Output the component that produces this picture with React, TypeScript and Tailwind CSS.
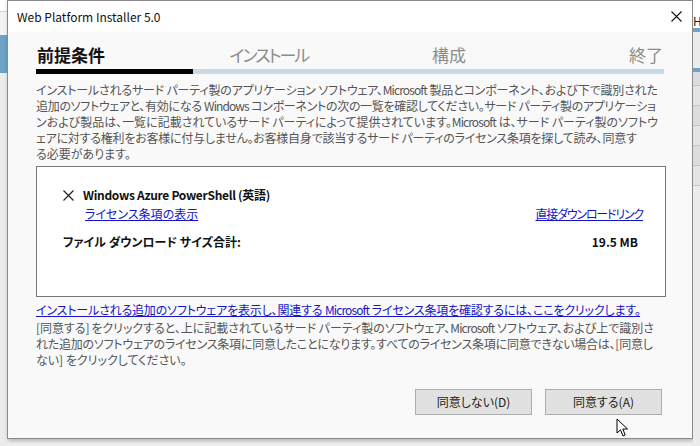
import React from 'react';

const font = "font-['Noto_Sans_CJK_JP','Noto_Sans',sans-serif] [font-feature-settings:'palt']";

const Cursor: React.FC = () => (
  <svg width="14" height="20" viewBox="0 0 14 20" className="absolute left-[616px] top-[418px]">
    <path d="M1 1 L1 15 L4.5 11.8 L7 18 L9.2 17 L6.8 11 L11.5 11 Z" fill="#fff" stroke="#000" strokeWidth="1" strokeLinejoin="round" />
  </svg>
);

const ButtonBox: React.FC<{ label: string }> = ({ label }) => (
  <button className="h-[26px] w-[117px] border border-[#adadad] bg-[#e1e1e1] text-[12px] text-[#222]">
    {label}
  </button>
);

// one wrapped line of the Windows text, stretched to the width it has in the screenshot
const Line: React.FC<{ w: string; children: React.ReactNode }> = ({ w, children }) => (
  <span className={`block whitespace-nowrap tracking-[-0.9px] [text-align-last:justify] ${w}`}>{children}</span>
);

export default function App() {
  return (
    <div className={`relative flex h-[446px] w-[700px] overflow-hidden bg-[#f0f0f0] ${font}`}>
      {/* left background strip */}
      <div className="flex w-[7px] flex-col">
        <div className="h-[12px] border-b border-[#d0d0d0] bg-white" />
        <div className="h-[23px] bg-[#f4f4f4]" />
        <div className="h-[38px] bg-[#6da3c6]" />
        <div className="flex-1 bg-[#ececec]" />
      </div>

      {/* dialog */}
      <div className="flex h-[439px] w-[686px] flex-col border border-[#8a8a8a] bg-[#f9f9f9] shadow-[1px_2px_4px_rgba(0,0,0,0.25)]">
        <div className="flex h-[31px] items-center justify-between bg-white pl-[9px] pr-[10px]">
          <span className="text-[12px] text-[#111]">Web Platform Installer 5.0</span>
          <svg width="11" height="11" viewBox="0 0 11 11">
            <path d="M0.5 0.5 L10.5 10.5 M10.5 0.5 L0.5 10.5" stroke="#111" strokeWidth="1.1" />
          </svg>
        </div>

        <div className="flex flex-1 flex-col pl-[28px] pr-[26px]">
          {/* steps */}
          <div className="grid h-[37px] grid-cols-4 items-end pb-[2px] text-[17px] leading-[24px]">
            <span className="pl-[1px] font-bold text-[#111]">前提条件</span>
            <span className="pl-[36px] tracking-[-2px] text-[#8c8c8c]">インストール</span>
            <span className="pl-[81px] text-[#8c8c8c]">構成</span>
            <span className="pr-[3px] text-right text-[#8c8c8c]">終了</span>
          </div>
          <div className="flex h-[5px] w-[628px]">
            <div className="w-[157px] bg-black" />
            <div className="flex-1 bg-[#c9d9e5]" />
          </div>

          <div className="mt-[8px] text-[12px] leading-[16px] text-[#555]">
            <Line w="w-[621px]">インストールされるサード パーティ製のアプリケーション ソフトウェア、Microsoft 製品とコンポーネント、および下で識別された</Line>
            <Line w="w-[619px]">追加のソフトウェアと、有効になる Windows コンポーネントの次の一覧を確認してください。サード パーティ製のアプリケーショ</Line>
            <Line w="w-[621px]">ンおよび製品は、一覧に記載されているサード パーティによって提供されています。Microsoft は、サード パーティ製のソフトウ</Line>
            <Line w="w-[600px]">ェアに対する権利をお客様に付与しません。お客様自身で該当するサード パーティのライセンス条項を探して読み、同意す</Line>
            <span className="block">る必要があります。</span>
          </div>

          {/* product box */}
          <div className="mt-[4px] flex h-[131px] w-[630px] flex-col border border-[#777] bg-white pl-[26px] pr-[22px] pt-[20px] text-[12px]">
            <div className="flex items-center gap-[9px]">
              <svg width="11" height="11" viewBox="0 0 11 11">
                <path d="M0.5 0.5 L10.5 10.5 M10.5 0.5 L0.5 10.5" stroke="#222" strokeWidth="1.2" />
              </svg>
              <span className="font-bold leading-[16px] tracking-[-0.3px] text-[#111]">Windows Azure PowerShell (英語)</span>
            </div>
            <div className="mt-[3px] flex items-center justify-between pl-[22px] leading-[16px]">
              <a className="text-[#1515c8] underline">ライセンス条項の表示</a>
              <a className="tracking-[-1.2px] text-[#1515c8] underline">直接ダウンロードリンク</a>
            </div>
            <div className="mt-[12px] flex items-center justify-between pr-[5px] leading-[16px]">
              <span className="font-bold text-[#111]">ファイル ダウンロード サイズ合計:</span>
              <span className="font-bold text-[#111]">19.5 MB</span>
            </div>
          </div>

          <a className="mt-[5px] text-[12px] leading-[16px] text-[#1515c8] underline">
            <Line w="w-[604px]">インストールされる追加のソフトウェアを表示し、関連する Microsoft ライセンス条項を確認するには、ここをクリックします。</Line>
          </a>

          <div className="mt-[2px] text-[12px] leading-[16px] text-[#555]">
            <Line w="w-[617px]">[同意する] をクリックすると、上に記載されているサード パーティ製のソフトウェア、Microsoft ソフトウェア、および上で識別さ</Line>
            <Line w="w-[616px]">れた追加のソフトウェアのライセンス条項に同意したことになります。すべてのライセンス条項に同意できない場合は、[同意し</Line>
            <span className="block">ない] をクリックしてください。</span>
          </div>

          <div className="mt-auto mb-[23px] flex justify-end gap-[13px] pr-[4px]">
            <ButtonBox label="同意しない(D)" />
            <ButtonBox label="同意する(A)" />
          </div>
        </div>
      </div>

      {/* right background strip */}
      <div className="flex w-[7px] flex-col">
        <div className="h-[14px] bg-white" />
        <div className="h-[14px] overflow-hidden bg-white text-[12px] leading-[14px] text-[#222]">H</div>
        <div className="h-[4px] bg-[#6da3c6]" />
        <div className="h-[36px] bg-[#ececec]" />
        <div className="h-[4px] bg-[#6da3c6]" />
        <div className="h-[14px] border-b border-[#c8c8c8] bg-[#dcdcdc]" />
        <div className="h-[20px] border-b border-[#c8c8c8] bg-[#e4e4e4]" />
        <div className="h-[20px] border-b border-[#c8c8c8] bg-[#dcdcdc]" />
        <div className="h-[20px] border-b border-[#c8c8c8] bg-[#e4e4e4]" />
        <div className="h-[20px] border-b border-[#c8c8c8] bg-[#dcdcdc]" />
        <div className="h-[20px] border-b border-[#c8c8c8] bg-[#e4e4e4]" />
        <div className="flex-1 bg-[#ececec]" />
      </div>

      <Cursor />
    </div>
  );
}
